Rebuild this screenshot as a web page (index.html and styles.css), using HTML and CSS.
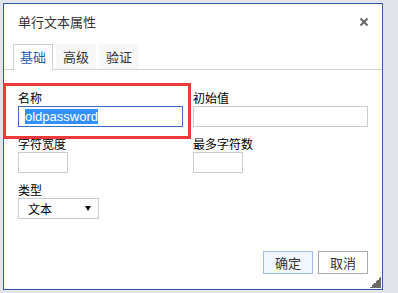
FILE: index.html
```html
<!DOCTYPE html>
<html lang="zh-CN">
<head>
    <meta charset="UTF-8">
    <meta name="viewport" content="width=device-width, initial-scale=1.0">
    <title>单行文本属性</title>
    <link rel="stylesheet" href="styles.css">
</head>
<body>
    <div class="dialog">
        <div class="dialog-header">
            <span class="dialog-title">单行文本属性</span>
            <svg class="close" width="10" height="10" viewBox="0 0 10 10">
                <path d="M1.5 1.5 L8.5 8.5 M8.5 1.5 L1.5 8.5" stroke="#666" stroke-width="2"/>
            </svg>
        </div>
        <div class="tabs">
            <div class="tab active">基础</div>
            <div class="tab">高级</div>
            <div class="tab">验证</div>
        </div>
        <div class="form">
            <div class="field">
                <label>名称</label>
                <div class="input focused"><span class="sel">oldpassword</span></div>
            </div>
            <div class="field">
                <label>初始值</label>
                <div class="input wide"></div>
            </div>
            <div class="field">
                <label>字符宽度</label>
                <div class="input small"></div>
            </div>
            <div class="field">
                <label>最多字符数</label>
                <div class="input small"></div>
            </div>
            <div class="field">
                <label>类型</label>
                <div class="select"><span>文本</span><span class="arrow"></span></div>
            </div>
        </div>
        <div class="dialog-footer">
            <button class="btn primary">确定</button>
            <button class="btn">取消</button>
        </div>
        <div class="grip"></div>
        <!-- annotation box around the name field -->
        <div class="mark"></div>
    </div>
</body>
</html>
```

FILE: styles.css
```css
body {
    margin: 0;
    padding: 3px;
    background-color: #e2e4ea;
    font-family: "Noto Sans CJK SC", "Liberation Sans", sans-serif;
}

.dialog {
    position: relative;
    box-sizing: border-box;
    width: 380px;
    height: 287px;
    background-color: #fff;
    border: 1px solid #2d5ba6;
    display: flex;
    flex-direction: column;
}

.dialog-header {
    display: flex;
    justify-content: space-between;
    align-items: center;
    padding: 8px 13px 0 14px;
    height: 20px;
}

.dialog-title {
    font-size: 13px;
    color: #333;
    line-height: 20px;
}

.close {
    display: block;
}

.tabs {
    display: flex;
    gap: 3px;
    margin-top: 12px;
    padding-left: 9px;
    border-bottom: 1px solid #d3d3d3;
}

.tab {
    box-sizing: border-box;
    width: 40px;
    height: 25px;
    line-height: 25px;
    text-align: center;
    font-size: 13px;
    color: #333;
    background-color: #f7f7f7;
}

.tab.active {
    color: #2a5caa;
    background-color: #fff;
    border: 1px solid #cfcfcf;
    border-bottom: none;
    height: 26px;
    line-height: 24px;
    margin-bottom: -1px;
}

.form {
    display: grid;
    grid-template-columns: 175px 1fr;
    row-gap: 9px;
    padding: 20px 14px 0;
}

.field label {
    display: block;
    font-size: 12px;
    line-height: 16px;
    color: #000;
}

.input {
    box-sizing: border-box;
    width: 165px;
    height: 21px;
    border: 1px solid #c8ccd2;
    padding: 2px 6px;
    font-family: "Liberation Sans", Arial, sans-serif;
    font-size: 13px;
    line-height: 15px;
}

.input.focused {
    border-color: #3b6cc2;
}

.input.wide {
    width: 175px;
}

.input.small {
    width: 50px;
}

.sel {
    background-color: #3390ff;
    color: #fff;
}

.select {
    box-sizing: border-box;
    width: 81px;
    height: 21px;
    border: 1px solid #c8ccd2;
    padding: 0 7px 0 9px;
    display: flex;
    justify-content: space-between;
    align-items: center;
    font-size: 12px;
    color: #000;
}

.arrow {
    width: 0;
    height: 0;
    border-left: 3px solid transparent;
    border-right: 3px solid transparent;
    border-top: 5px solid #111;
}

.dialog-footer {
    margin-top: auto;
    display: flex;
    justify-content: flex-end;
    gap: 5px;
    padding: 0 14px 15px;
}

.btn {
    box-sizing: border-box;
    width: 50px;
    height: 23px;
    padding: 0;
    font-family: "Noto Sans CJK SC", sans-serif;
    font-size: 13px;
    color: #333;
    background-color: #fff;
    border: 1px solid #aaa;
}

.btn.primary {
    background-color: #f1f6ff;
    border-color: #9bbdf0;
}

.grip {
    position: absolute;
    right: 1px;
    bottom: 1px;
    width: 11px;
    height: 11px;
    background: linear-gradient(135deg, transparent 50%, #6a6a6a 50%);
}

.mark {
    position: absolute;
    left: -1px;
    top: 79px;
    box-sizing: border-box;
    width: 188px;
    height: 56px;
    border: 3px solid #ef3a3a;
}
```
